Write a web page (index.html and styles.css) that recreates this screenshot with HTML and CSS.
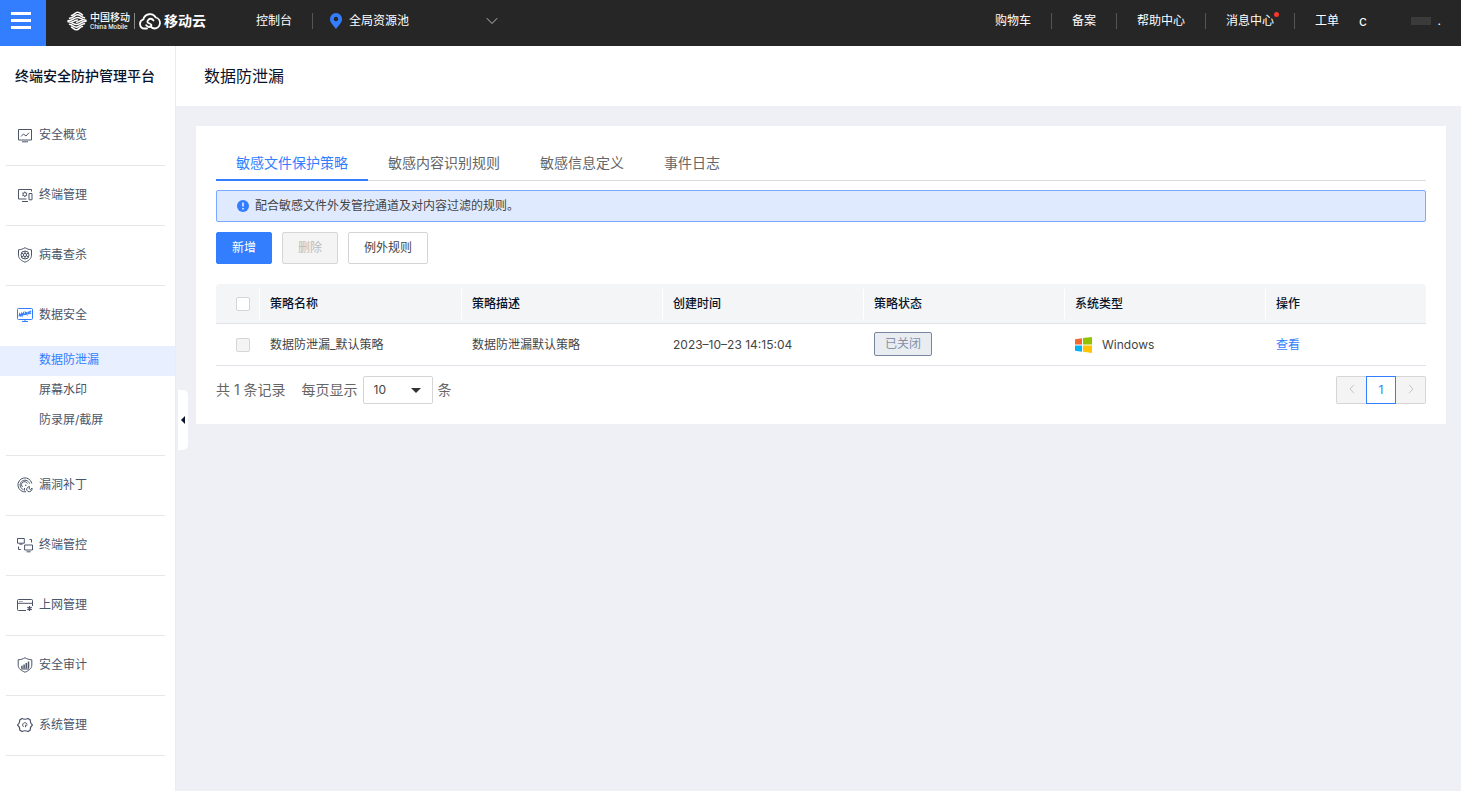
FILE: index.html
```html
<!DOCTYPE html>
<html lang="zh-CN">
<head>
<meta charset="utf-8">
<title>数据防泄漏</title>
<link rel="stylesheet" href="styles.css">
</head>
<body>
<header class="topbar">
  <button class="menu-btn" aria-label="菜单"><span></span><span></span><span></span></button>
  <a class="logo" href="#">
    <svg class="logo-mobile" viewBox="0 0 20 20" width="20" height="20" fill="none" stroke="#fff" stroke-width="1.500" stroke-linecap="round">
      <path d="M4.500 4.500C7 4.500 8 1.200 10.500 1.200S13.500 3 15.500 4"/>
      <path d="M2.500 7.200C6.500 7.200 7.500 3.800 10.500 3.800S14 6.300 17.500 6.800"/>
      <path d="M1 9.800C6 9.800 7 6.400 10.500 6.400S14.500 9.200 19 9.200"/>
      <path d="M1 10.800C5.500 10.800 6 13.600 9.500 13.600S14 10.200 19 10.200" />
      <path d="M2.500 13.200C6 13.700 6.500 16.200 9.500 16.200S13.500 12.800 17.500 12.800"/>
      <path d="M4.500 16C6.500 17 7 18.800 9.500 18.800S13 15.500 15.500 15.500"/>
      <path d="M5 10.700C8 10.700 8 8.900 10.500 8.900M9.500 11.200C12 11.200 12 9.600 15 9.600"/>
    </svg>
    <span class="logo-names"><span class="logo-cn">中国移动</span><span class="logo-en">China Mobile</span></span>
    <span class="logo-line"></span>
    <svg class="logo-cloud" viewBox="0 0 22 18" width="22" height="18" fill="none" stroke="#fff" stroke-width="1.800" stroke-linecap="round">
      <path d="M8 16.500H5.500A4.600 4.600 0 0 1 4.300 7.500 A6.800 6.800 0 0 1 16.800 5.500 A5.600 5.600 0 0 1 15.500 16.500 C13.500 16.500 12.500 15.500 11.500 14.500"/>
      <path d="M14.500 8.500C13 6.300 10.800 6.300 9.300 7.800C7.500 9.500 8.500 10.800 10.500 11.500C12.800 12.300 13 13.500 11.500 14.500C10 15.500 8.500 14.800 7.200 13.200"/>
    </svg>
    <span class="logo-yun">移动云</span>
  </a>
  <a class="console" href="#">控制台</a>
  <button class="region">
    <svg viewBox="0 0 12 16" width="12" height="16"><path fill="#337dff" fill-rule="evenodd" d="M6 0a6 6 0 0 1 6 6c0 3.800-3.500 6.500-6 10C3.500 12.500 0 9.800 0 6a6 6 0 0 1 6-6zm0 3.800a2.200 2.200 0 1 0 0 4.400 2.200 2.200 0 0 0 0-4.400z"/></svg>
    <span>全局资源池</span>
    <svg class="chev" viewBox="0 0 12 8" width="12" height="8" fill="none" stroke="#bbb"><path d="M.8 1.200 6 6.500l5.200-5.300"/></svg>
  </button>
  <nav class="topnav">
    <a href="#">购物车</a><a href="#">备案</a><a href="#">帮助中心</a><a href="#"><span class="msg">消息中心</span></a><a href="#">工单</a>
  </nav>
  <div class="user"><span class="name">c</span><span class="mask"></span><span>.</span></div>
</header>
<div class="body">
  <aside class="side">
    <h2 class="side-title">终端安全防护管理平台</h2>
    <ul class="menu">
      <li><a href="#"><svg viewBox="0 0 16 16" class="ico"><path d="M1.500 2.500h13v10.500h-13zM5 14.800h6M4 9.500 6.500 7 9 9l3-3.300"/></svg>安全概览</a></li>
      <li><a href="#"><svg viewBox="0 0 16 16" class="ico"><path d="M14.500 4.500v-2h-13v9.500h8M5 14.500h6M12 6.500h3v6.300h-3z"/><circle cx="7.800" cy="7.300" r="1.800"/><path d="M7.800 4.500v1M7.800 9.100v1M5.400 5.900l.9.500M9.300 8.200l.9.500M5.400 8.700l.9-.5M9.300 6.400l.9-.5"/></svg>终端管理</a></li>
      <li><a href="#"><svg viewBox="0 0 16 16" class="ico"><path d="M8 .7C6 2 4 2.600 1.500 2.800v5.400c0 3.500 3 5.600 6.500 7 3.500-1.400 6.500-3.500 6.500-7V2.800C12 2.600 10 2 8 .7z"/><circle cx="8" cy="8" r="4"/><circle cx="8" cy="8" r="1.600"/><path d="M8 4v2.400M8 9.600V12M4.500 6l2.100 1.200M9.400 8.800l2.100 1.200M4.500 10l2.100-1.200M9.400 7.200 11.500 6"/></svg>病毒查杀</a></li>
      <li class="open"><a href="#"><svg viewBox="0 0 16 16" class="ico blue"><path d="M1.500 1.500h13a1 1 0 0 1 1 1v9a1 1 0 0 1-1 1h-13a1 1 0 0 1-1-1v-9a1 1 0 0 1 1-1zM5 14.500h6M8 12.500v2"/><path stroke-width="1.200" d="M2 9.300 2.700 6.800l1 2 1-2.300.5 2.200 1.200-2.900.9 2.400M8.300 8V5.300l1.600 2.200V4.900M11.400 7.200V4.600M14.200 4.200l-1.400.3v1.900l1.400-.3"/></svg>数据安全</a>
        <ul class="sub">
          <li><a class="on" href="#">数据防泄漏</a></li>
          <li><a href="#">屏幕水印</a></li>
          <li><a href="#">防录屏/截屏</a></li>
        </ul>
      </li>
      <li><a href="#"><svg viewBox="0 0 16 16" class="ico"><path d="M14.800 6.500A7 7 0 1 0 9 14.800M12.500 6.600A4.800 4.800 0 1 0 6.500 12.600M5.600 10a3 3 0 1 1 4.700-3.400M7.500 13.500V11M8 8.200h1.500"/><path d="M11 14.500a3 3 0 0 0 4-3.500l-1.500 1.500-1.500-1 .5-2a3 3 0 0 0-2.800 3.500z"/></svg>漏洞补丁</a></li>
      <li><a href="#"><svg viewBox="0 0 16 16" class="ico"><path d="M.5 1.500h6.800v4.700H.5zM7.600 8h7.900v5H7.600zM9.500 14.800h4.200M2.500 7.200h3M12.500 2.500h2v3M1.500 9.500v3h2.300"/></svg>终端管控</a></li>
      <li><a href="#"><svg viewBox="0 0 16 16" class="ico"><path d="M9 13.500H1.500a1 1 0 0 1-1-1v-9a1 1 0 0 1 1-1h13a1 1 0 0 1 1 1V9M.5 6.300h15M2.500 4.500h1M4.500 4.500h1"/><path stroke-width="1.300" d="M12.500 9v5M10.300 10.200l4.400 2.600M10.300 12.800l4.400-2.600"/></svg>上网管理</a></li>
      <li><a href="#"><svg viewBox="0 0 16 16" class="ico"><path d="M8 .7C6 2 4 2.600 1.200 2.800v5.400c0 3.500 3.300 5.600 6.800 7 3.500-1.400 6.800-3.500 6.800-7V2.800C12 2.600 10 2 8 .7zM4 12h8"/><path stroke-width="1.500" d="M4.900 11.500V8.800M7.100 11.500V7.500M9.300 11.500V6M11.500 11.500V4.500"/></svg>安全审计</a></li>
      <li><a href="#"><svg viewBox="0 0 16 16" class="ico"><path stroke-width="1.200" d="M5 1.500Q8 3 11 1.500L13.300 3Q13 6 15.400 8 13 10 13.300 13L11 14.500Q8 13 5 14.500L2.700 13Q3 10 .6 8 3 6 2.700 3z"/><path d="M6.500 9.800A2.300 2.300 0 1 1 10.200 7.500M10.200 8.200H8.500v2"/></svg>系统管理</a></li>
    </ul>
    <button class="handle" aria-label="收起"></button>
  </aside>
  <main class="main">
    <h1 class="page-title">数据防泄漏</h1>
    <section class="card">
      <nav class="tabs"><a class="on" href="#">敏感文件保护策略</a><a href="#">敏感内容识别规则</a><a href="#">敏感信息定义</a><a href="#">事件日志</a></nav>
      <div class="tip"><svg viewBox="0 0 12 12" width="12" height="12"><circle cx="6" cy="6" r="6" fill="#337dff"/><path d="M6 2.500v4M6 8v1.500" stroke="#fff" stroke-width="1.400"/></svg><span>配合敏感文件外发管控通道及对内容过滤的规则。</span></div>
      <div class="actions"><button class="btn primary">新增</button><button class="btn" disabled>删除</button><button class="btn">例外规则</button></div>
      <table class="grid">
        <colgroup><col class="c-check"><col class="c-name"><col class="c-data"><col class="c-data"><col class="c-data"><col class="c-data"><col></colgroup>
        <thead><tr><th><input type="checkbox" aria-label="全选"></th><th>策略名称</th><th>策略描述</th><th>创建时间</th><th>策略状态</th><th>系统类型</th><th>操作</th></tr></thead>
        <tbody><tr><td><input type="checkbox" aria-label="选择此策略" disabled></td><td>数据防泄漏_默认策略</td><td>数据防泄漏默认策略</td><td>2023–10–23 14:15:04</td><td><span class="tag">已关闭</span></td>
          <td><span class="os"><svg viewBox="0 0 17 16" width="17" height="16"><path fill="#f8682c" d="M0 2.200 7 1.200v6.300H0z"/><path fill="#91c300" d="M8 1 17 0v7.500H8z"/><path fill="#00b4f1" d="M0 8.500h7v6.300l-7-1z"/><path fill="#ffc300" d="M8 8.500h9V16l-9-1.200z"/></svg>Windows</span></td><td><a class="link" href="#">查看</a></td></tr></tbody>
      </table>
      <div class="pager">
        <span>共 1 条记录</span>
        <label class="size"><span>每页显示</span><span class="select"><select><option>10</option></select></span><span>条</span></label>
        <div class="pages">
          <button disabled aria-label="上一页"><svg viewBox="0 0 6 10" width="6" height="10"><path d="M5 .8 1 5l4 4.200"/></svg></button>
          <button class="cur">1</button>
          <button disabled aria-label="下一页"><svg viewBox="0 0 6 10" width="6" height="10"><path d="M1 .8 5 5 1 9.200"/></svg></button>
        </div>
      </div>
    </section>
  </main>
</div>
</body>
</html>
```
FILE: styles.css
```css
* { box-sizing: border-box; }
body {
  margin: 0;
  min-height: 100vh;
  display: flex;
  flex-direction: column;
  background: #eff0f5;
  color: #444;
  font: 12px/20px Inter, "Noto Sans CJK SC", sans-serif;
}
a { color: inherit; text-decoration: none; }
button, input, select { font: inherit; margin: 0; padding: 0; }
ul { list-style: none; margin: 0; padding: 0; }
h1, h2 { margin: 0; }

.topbar { display: flex; align-items: center; height: 46px; padding-bottom: 4px; background: #262626; color: #fff; }
.menu-btn { display: flex; flex-direction: column; align-items: flex-start; justify-content: center; gap: 4px; align-self: flex-start; flex: none; width: 46px; height: 46px; padding: 0 0 5px 11px; border: 0; background: #337dff; }
.menu-btn span { width: 20px; height: 3px; background: #fff; }
.logo { display: flex; align-items: center; margin-left: 21px; }
.logo-names { display: flex; flex-direction: column; margin-left: 3px; width: 40px; white-space: nowrap; }
.logo-cn { font-size: 10px; line-height: 11px; font-weight: 500; }
.logo-en { font-size: 6px; line-height: 7px; font-weight: 500; }
.logo-line { width: 1px; height: 16px; margin: 0 4px; background: #888; }
.logo-yun { margin-left: 3px; font-size: 14px; font-weight: 700; }
.console { margin-left: 50px; padding-right: 20px; border-right: 1px solid #555; line-height: 16px; }
.region { display: flex; align-items: center; width: 168px; margin-left: 17px; border: 0; background: none; color: inherit; }
.region span { margin-left: 7px; }
.region .chev { margin-left: auto; }
.topnav { display: flex; margin-left: auto; line-height: 16px; }
.topnav a { padding: 0 20px; border-right: 1px solid #555; }
.topnav a:last-child { border: 0; }
.msg { position: relative; }
.msg::after { content: ""; position: absolute; right: -5px; top: -1px; width: 5px; height: 5px; border-radius: 50%; background: #f5392b; }
.user { display: flex; align-items: center; width: 102px; padding-right: 20px; }
.name { font-size: 14px; }
.mask { width: 20px; height: 8px; margin: 0 7px 0 auto; background: #3b3b3b; }

.body { display: flex; flex: 1; }
.side { position: relative; flex: none; width: 176px; border-right: 1px solid #ebecf0; background: #fff; color: #4b5568; }
.side-title { height: 60px; padding-left: 15px; font-size: 14px; line-height: 60px; font-weight: 500; color: #07132b; }
.menu > li::after { content: ""; display: block; height: 1px; margin: 0 10px 0 6px; background: #e6e7ea; }
.menu > li > a { display: flex; align-items: center; gap: 6px; height: 59px; padding: 0 0 1px 17px; }
.ico { width: 16px; height: 16px; fill: none; stroke: #4b5568; stroke-width: 1; }
.ico.blue { stroke: #337dff; }
.sub { padding: 1px 0 19px; }
.sub a { display: block; padding-left: 39px; line-height: 28px; height: 30px; }
.sub .on { background: #e8f0ff; color: #337dff; }
.handle { position: absolute; left: 178px; top: 344px; width: 10px; height: 60px; border: 0; border-radius: 0 5px 5px 0; background: #fff; }
.handle::before { content: ""; display: block; width: 0; margin-left: 3px; border: 4px solid transparent; border-left: 0; border-right-color: #07132b; }

.main { flex: 1; min-width: 0; }
.page-title { height: 60px; padding-left: 28px; background: #fff; font-size: 16px; line-height: 60px; font-weight: 400; color: #07132b; }
.card { margin: 20px 15px 20px 20px; padding: 20px; background: #fff; }
.tabs { display: flex; height: 35px; border-bottom: 1px solid #dcdcdc; font-size: 14px; line-height: 33px; color: #666; }
.tabs a { height: 35px; padding: 0 20px; }
.tabs .on { border-bottom: 2px solid #337dff; color: #337dff; }
.tip { display: flex; align-items: center; gap: 6px; height: 32px; margin-top: 9px; padding-left: 20px; border: 1px solid #7aa9ff; border-radius: 2px; background: #e0eaff; color: #444; }
.actions { display: flex; gap: 10px; margin: 10px 0 20px; }
.btn { height: 32px; padding: 0 15px; border: 1px solid #d5d5d5; border-radius: 2px; background: #fff; color: #444; }
.btn.primary { border-color: #337dff; background: #337dff; color: #fff; }
.btn:disabled { background: #f4f4f4; color: #bbb; }

.grid { width: 100%; table-layout: fixed; border-collapse: separate; border-spacing: 0; }
.c-check { width: 44px; }
.c-name { width: 202px; }
.c-data { width: 201px; }
.grid th, .grid td { padding: 0 10px; border-bottom: 1px solid #dfe3e9; text-align: left; font-weight: 400; }
.grid th { position: relative; height: 40px; background: #f3f5f7; color: #07132b; font-weight: 500; }
.grid th:not(:last-child)::after { content: ""; position: absolute; right: 0; top: 5px; bottom: 4px; width: 1px; background: #fff; }
.grid th:first-child { border-top-left-radius: 4px; }
.grid th:last-child { border-top-right-radius: 4px; }
.grid td { height: 42px; }
.grid tr > :first-child { padding: 0 0 0 20px; }
.grid input { display: block; appearance: none; width: 14px; height: 14px; border: 1px solid #d5d5d5; border-radius: 2px; background: #fff; }
.grid input:disabled { background: #f4f4f4; }
.tag { display: block; width: 58px; height: 24px; margin-bottom: 1px; border: 1px solid #77869e; border-radius: 2px; background: #e9ecf1; color: #8490a5; line-height: 22px; text-align: center; }
.os { display: flex; align-items: center; gap: 10px; }
.link { color: #337dff; }

.pager { display: flex; align-items: center; margin-top: 10px; font-size: 14px; color: #666; }
.size { display: flex; align-items: center; gap: 5px; margin-left: 16px; }
.select { position: relative; }
.select select { display: block; appearance: none; width: 70px; height: 28px; padding-left: 10px; border: 1px solid #d5d5d5; border-radius: 2px; background: #fff; color: #444; font-size: 12px; }
.select::after { content: ""; position: absolute; right: 12px; top: 12px; border: 5px solid transparent; border-top-color: #333; border-bottom: 0; pointer-events: none; }
.pages { display: flex; margin-left: auto; }
.pages button { width: 30px; height: 28px; border: 1px solid #d5d5d5; background: #f4f4f4; font-size: 12px; }
.pages button:first-child { border-right: 0; border-radius: 2px 0 0 2px; }
.pages button:last-child { border-left: 0; border-radius: 0 2px 2px 0; }
.pages .cur { border-color: #337dff; background: #fff; color: #337dff; }
.pages path { fill: none; stroke: #c4c4c4; }
```
